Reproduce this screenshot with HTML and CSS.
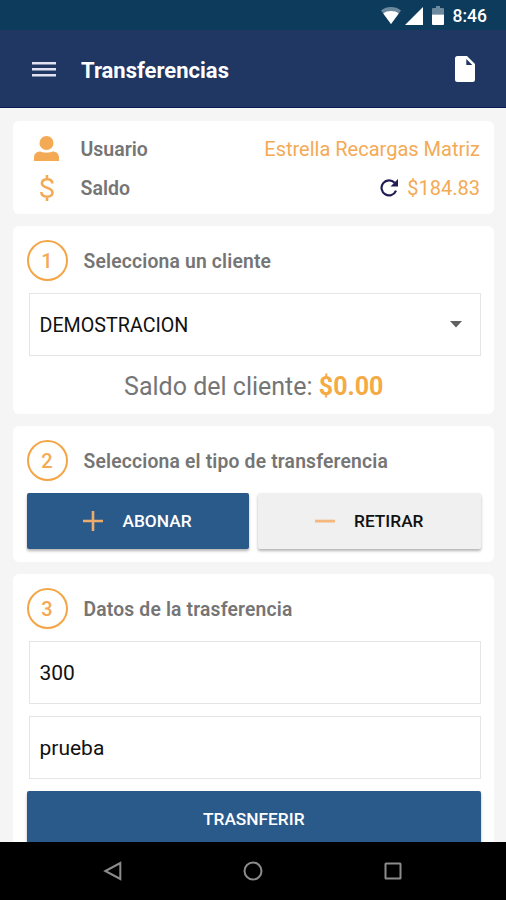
FILE: index.html
```html
<!doctype html>
<html lang="es">
  <head>
    <meta charset="UTF-8" />
    <meta name="viewport" content="width=device-width, initial-scale=1.0" />
    <title>Transferencias</title>
    <link rel="stylesheet" href="styles.css">
  </head>
  <body>
    <div class="status-bar">
      <svg class="wifi" viewBox="0 0 20 17" width="20" height="17" fill="#ffffff">
        <path opacity="0.4" d="M0 3.5C5.5-1.1 14.500-1.100 20 3.500L10 17z" />
        <path d="M2.300 6.500C6.500 3.300 13.500 3.300 17.700 6.500L10 17z" />
      </svg>
      <svg class="signal" viewBox="0 0 18 18" width="18" height="18" fill="#ffffff">
        <path d="M18 0v18H0z" />
      </svg>
      <svg class="battery" viewBox="0 0 12 19" width="12" height="19" fill="#ffffff">
        <path opacity="0.4" d="M4 0h4v2h3q1 0 1 1v5.500H0V3q0-1 1-1h3z" />
        <path d="M0 8.500h12V18q0 1-1 1H1q-1 0-1-1z" />
      </svg>
      <span class="time">8:46</span>
    </div>
    <header class="toolbar">
      <button class="icon-btn" aria-label="Menú">
        <svg viewBox="0 0 24 16" width="24" height="16" fill="#e3e2f2">
          <path d="M0 1h24v2.500H0zM0 7h24v2.500H0zM0 13h24v2.500H0z" />
        </svg>
      </button>
      <h1>Transferencias</h1>
      <button class="icon-btn" aria-label="Documento">
        <svg viewBox="0 0 20 26" width="20" height="26" fill="#ffffff">
          <path fill-rule="evenodd" d="M2.500 0H12l8 8v15.500q0 2.500-2.500 2.500h-15Q0 26 0 23.500v-21Q0 0 2.500 0zM11.300 3v6h6z" />
        </svg>
      </button>
    </header>
    <main class="content">
      <section class="card account">
        <div class="account-row">
          <div class="account-icon">
            <svg viewBox="0 0 25 25" width="25" height="25" fill="#f4aa55">
              <circle cx="12.500" cy="7" r="7" />
              <path d="M0 25v-3.500C0 17.500 3 15.500 6.500 15.500c3.500 1.600 8.500 1.600 12 0C22 15.500 25 17.500 25 21.500V25z" />
            </svg>
          </div>
          <span class="label">Usuario</span>
          <span class="value">Estrella Recargas Matriz</span>
        </div>
        <div class="account-row">
          <div class="account-icon">
            <svg viewBox="0 0 14 26" width="14" height="26" fill="none" stroke="#f4aa55" stroke-width="2.600">
              <path d="M7 0v4.500M7 21.500V26M12.400 8.500C12.200 5.700 10 4.300 7 4.300 4 4.300 1.900 5.900 1.900 8.300c0 2.600 2.200 3.500 5.100 4.400 3.200 1 5.500 2 5.500 4.800 0 2.500-2.200 4.200-5.300 4.200-3.400 0-5.700-1.600-5.900-4.700" />
            </svg>
          </div>
          <span class="label">Saldo</span>
          <span class="value">
            <svg class="refresh" viewBox="0 0 18 18" width="18" height="18">
              <path d="M14.600 3.800A7.500 7.500 0 1 0 16 11.600" fill="none" stroke="#1f1d52" stroke-width="2.200" />
              <path d="M18 0v7.500h-7.500z" fill="#1f1d52" />
            </svg>
            <span class="amount">$184.83</span>
          </span>
        </div>
      </section>

      <section class="card client">
        <div class="step">
          <span class="step-number">1</span>
          <h2>Selecciona un cliente</h2>
        </div>
        <div class="field select">
          <span>DEMOSTRACION</span>
          <svg viewBox="0 0 12 7" width="12" height="7" fill="#616161">
            <path d="M0 0h12L6 6.500z" />
          </svg>
        </div>
        <p class="client-balance">Saldo del cliente: <strong>$0.00</strong></p>
      </section>

      <section class="card transfer-type">
        <div class="step">
          <span class="step-number">2</span>
          <h2>Selecciona el tipo de transferencia</h2>
        </div>
        <div class="type-buttons">
          <button class="btn btn-primary">
            <svg viewBox="0 0 20 20" width="20" height="20" fill="#edac6b">
              <path d="M8.700 0h2.600v8.700H20v2.600h-8.700V20H8.700v-8.700H0V8.700h8.700z" />
            </svg>
            <span>ABONAR</span>
          </button>
          <button class="btn btn-light">
            <svg viewBox="0 0 20 20" width="20" height="20" fill="#f4b77d">
              <path d="M0 8.700h20v2.800H0z" />
            </svg>
            <span>RETIRAR</span>
          </button>
        </div>
      </section>

      <section class="card transfer-data">
        <div class="step">
          <span class="step-number">3</span>
          <h2>Datos de la trasferencia</h2>
        </div>
        <div class="field">300</div>
        <div class="field">prueba</div>
        <button class="btn btn-primary btn-submit">TRASNFERIR</button>
      </section>
    </main>
    <nav class="nav-bar">
      <svg viewBox="0 0 20 20" width="20" height="20">
        <path d="M17.300 2v16L2.300 10z" />
      </svg>
      <svg viewBox="0 0 20 20" width="20" height="20">
        <circle cx="10" cy="10" r="8.500" />
      </svg>
      <svg viewBox="0 0 20 20" width="20" height="20">
        <rect x="2.500" y="2.500" width="15" height="15" rx="0.500" />
      </svg>
    </nav>
  </body>
</html>
```
FILE: styles.css
```css
* {
  margin: 0;
  padding: 0;
  box-sizing: border-box;
}

body {
  display: flex;
  flex-direction: column;
  height: 100vh;
  overflow: hidden;
  font-family: Roboto, sans-serif;
  background: #f5f5f5;
  color: #757575;
}

svg {
  display: block;
  flex-shrink: 0;
}

button {
  border: none;
  font-family: inherit;
  cursor: pointer;
}

.status-bar {
  display: flex;
  align-items: center;
  justify-content: flex-end;
  height: 30px;
  flex-shrink: 0;
  padding: 2px 19px 0 0;
  background: #0d3b5c;
}

.wifi {
  margin-bottom: 1px;
}

.signal {
  margin-left: 4px;
}

.battery {
  margin-left: 9px;
  margin-bottom: 2px;
}

.time {
  margin-left: 9px;
  font-size: 17.5px;
  font-weight: 500;
  line-height: 20px;
  color: #ffffff;
}

.toolbar {
  display: flex;
  align-items: center;
  height: 78px;
  flex-shrink: 0;
  padding: 0 31px 0 32px;
  background: #1f3762;
  border-bottom: 1px solid #0a1a55;
}

.toolbar h1 {
  flex: 1;
  margin: 3px 0 0 25px;
  font-size: 22px;
  font-weight: 700;
  color: #ffffff;
}

.icon-btn {
  background: none;
}

.content {
  flex: 1;
  min-height: 0;
  overflow: hidden;
  padding: 13px 12px 0 12.5px;
}

.card {
  margin-bottom: 12px;
  padding: 14px 13px 13px 14px;
  background: #ffffff;
  border-radius: 6px;
}

.account {
  height: 93px;
  padding: 8px 14px 0 14px;
}

.account-row {
  display: flex;
  align-items: center;
  height: 39px;
}

.account-icon {
  display: flex;
  justify-content: center;
  width: 40px;
}

.label {
  margin: 2px 0 0 14px;
  font-size: 19.5px;
  font-weight: 600;
}

.value {
  display: flex;
  align-items: center;
  margin-left: auto;
  font-size: 20px;
  color: #f4aa55;
}

.refresh {
  margin-right: 9px;
}

.step {
  display: flex;
  align-items: center;
  height: 41px;
}

.step-number {
  display: flex;
  align-items: center;
  justify-content: center;
  width: 41px;
  height: 41px;
  border: 2px solid #f4a545;
  border-radius: 50%;
  font-size: 20px;
  font-weight: 500;
  color: #f4aa55;
}

.step h2 {
  margin: 2px 0 0 16px;
  font-size: 19.3px;
  font-weight: 600;
  letter-spacing: 0.18px;
}

.field {
  display: flex;
  align-items: center;
  height: 63px;
  margin: 12px 0 0 2px;
  padding: 0 19px 0 10px;
  border: 1px solid #e5e5e5;
  font-size: 21px;
  color: #111111;
}

.select {
  padding-right: 18px;
  justify-content: space-between;
  font-size: 19.7px;
}

.select span {
  margin-top: 2px;
}

.client {
  height: 188px;
}

.client-balance {
  margin-top: 16px;
  font-size: 25px;
  line-height: 30px;
  text-align: center;
}

.client-balance strong {
  font-weight: 700;
  color: #f4aa45;
}

.transfer-type {
  height: 136px;
}

.type-buttons {
  display: grid;
  grid-template-columns: 222px 1fr;
  gap: 9px;
  margin-top: 12px;
}

.btn {
  display: flex;
  align-items: center;
  justify-content: center;
  height: 56px;
  border-radius: 2px;
  box-shadow: 0 2px 3px rgba(0, 0, 0, 0.3);
  font-size: 17.3px;
  font-weight: 500;
}

.btn svg {
  margin-right: 19px;
}

.btn-primary {
  background: #2a5a8a;
  color: #ffffff;
}

.btn-light {
  background: #f0f0f0;
  color: #111111;
}

.btn-submit {
  width: 100%;
  margin-top: 12px;
}

.nav-bar {
  display: flex;
  justify-content: center;
  gap: 120px;
  height: 58px;
  flex-shrink: 0;
  padding-top: 19px;
  background: #000000;
}

.nav-bar svg {
  fill: none;
  stroke: #8c8c8c;
  stroke-width: 2;
}
```
